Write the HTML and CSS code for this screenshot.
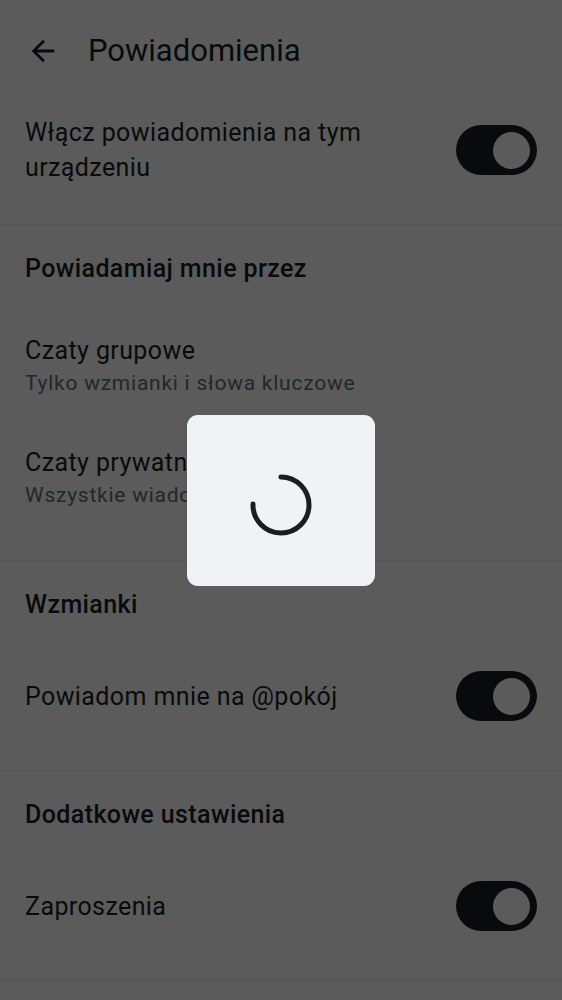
FILE: index.html
```html
<!DOCTYPE html>
<html lang="pl">
<head>
<meta charset="utf-8">
<title>Powiadomienia</title>
<link rel="stylesheet" href="styles.css">
</head>
<body>
<div class="page">
  <header class="topbar">
    <span class="back">
      <svg viewBox="0 0 24 24" width="34" height="34"><path d="M20 11H7.83l5.59-5.59L12 4l-8 8 8 8 1.41-1.41L7.83 13H20v-2z" fill="#1b1d22"/></svg>
    </span>
    <h1 class="title">Powiadomienia</h1>
  </header>

  <section class="section">
    <div class="row toggle-row first">
      <div class="label wide">Włącz powiadomienia na tym urządzeniu</div>
      <span class="switch"><span class="knob"></span></span>
    </div>
  </section>

  <section class="section">
    <div class="sec-head">Powiadamiaj mnie przez</div>
    <div class="row two-line">
      <div class="label">Czaty grupowe</div>
      <div class="sub">Tylko wzmianki i słowa kluczowe</div>
    </div>
    <div class="row two-line">
      <div class="label">Czaty prywatne</div>
      <div class="sub">Wszystkie wiadomości</div>
    </div>
  </section>

  <section class="section">
    <div class="sec-head">Wzmianki</div>
    <div class="row toggle-row">
      <div class="label">Powiadom mnie na @pokój</div>
      <span class="switch"><span class="knob"></span></span>
    </div>
  </section>

  <section class="section">
    <div class="sec-head">Dodatkowe ustawienia</div>
    <div class="row toggle-row">
      <div class="label">Zaproszenia</div>
      <span class="switch"><span class="knob"></span></span>
    </div>
  </section>
</div>

<div class="scrim">
  <div class="dialog">
    <svg class="spinner" viewBox="0 0 70 70" width="70" height="70"><path d="M35 7 A28 28 0 1 1 7.02 34.02" fill="none" stroke="#1b1d22" stroke-width="5" stroke-linecap="round"/></svg>
  </div>
</div>
</body>
</html>
```

FILE: styles.css
```css
html, body {
  margin: 0;
  padding: 0;
  background: #ffffff;
}
body {
  font-family: Roboto, "Noto Sans", "Liberation Sans", sans-serif;
  color: #1b1d22;
  width: 562px;
  height: 1000px;
  overflow: hidden;
}
.page {
  display: flex;
  flex-direction: column;
}
.topbar {
  height: 101px;
  display: flex;
  align-items: center;
  padding-left: 26px;
  box-sizing: border-box;
}
.back {
  display: flex;
  width: 34px;
  height: 34px;
  margin-right: 28px;
}
.title {
  margin: 0;
  font-size: 31px;
  font-weight: 400;
  letter-spacing: 0;
}
.section {
  border-bottom: 1px solid #ebeef2;
  padding-bottom: 25px;
}
.sec-head {
  height: 86px;
  display: flex;
  align-items: center;
  padding: 0 25px;
  font-size: 25px;
  font-weight: 500;
  letter-spacing: 0.4px;
}
.row {
  padding: 24px 25px;
}
.row.first {
  padding-top: 14px;
  padding-bottom: 14px;
}
.toggle-row {
  display: flex;
  align-items: center;
  justify-content: space-between;
}
.label {
  font-size: 25px;
  line-height: 35px;
  letter-spacing: 0.4px;
}
.label.wide {
  max-width: 380px;
}
.two-line .label {
  line-height: 32px;
}
.sub {
  font-size: 21px;
  line-height: 32px;
  color: #656d77;
  letter-spacing: 0.75px;
}
.switch {
  flex: none;
  width: 81px;
  height: 50px;
  border-radius: 25px;
  background: #1b1d22;
  display: flex;
  align-items: center;
  justify-content: flex-end;
  padding-right: 7px;
  box-sizing: border-box;
}
.knob {
  width: 37px;
  height: 37px;
  border-radius: 50%;
  background: #ffffff;
}
.scrim {
  position: fixed;
  inset: 0;
  background: rgba(0, 0, 0, 0.643);
  display: flex;
  align-items: center;
  justify-content: center;
}
.dialog {
  width: 188px;
  height: 171px;
  border-radius: 11px;
  background: #f1f2f6;
  display: flex;
  align-items: center;
  justify-content: center;
  box-sizing: border-box;
  padding-top: 9px;
}
.spinner {
  display: block;
}
```
